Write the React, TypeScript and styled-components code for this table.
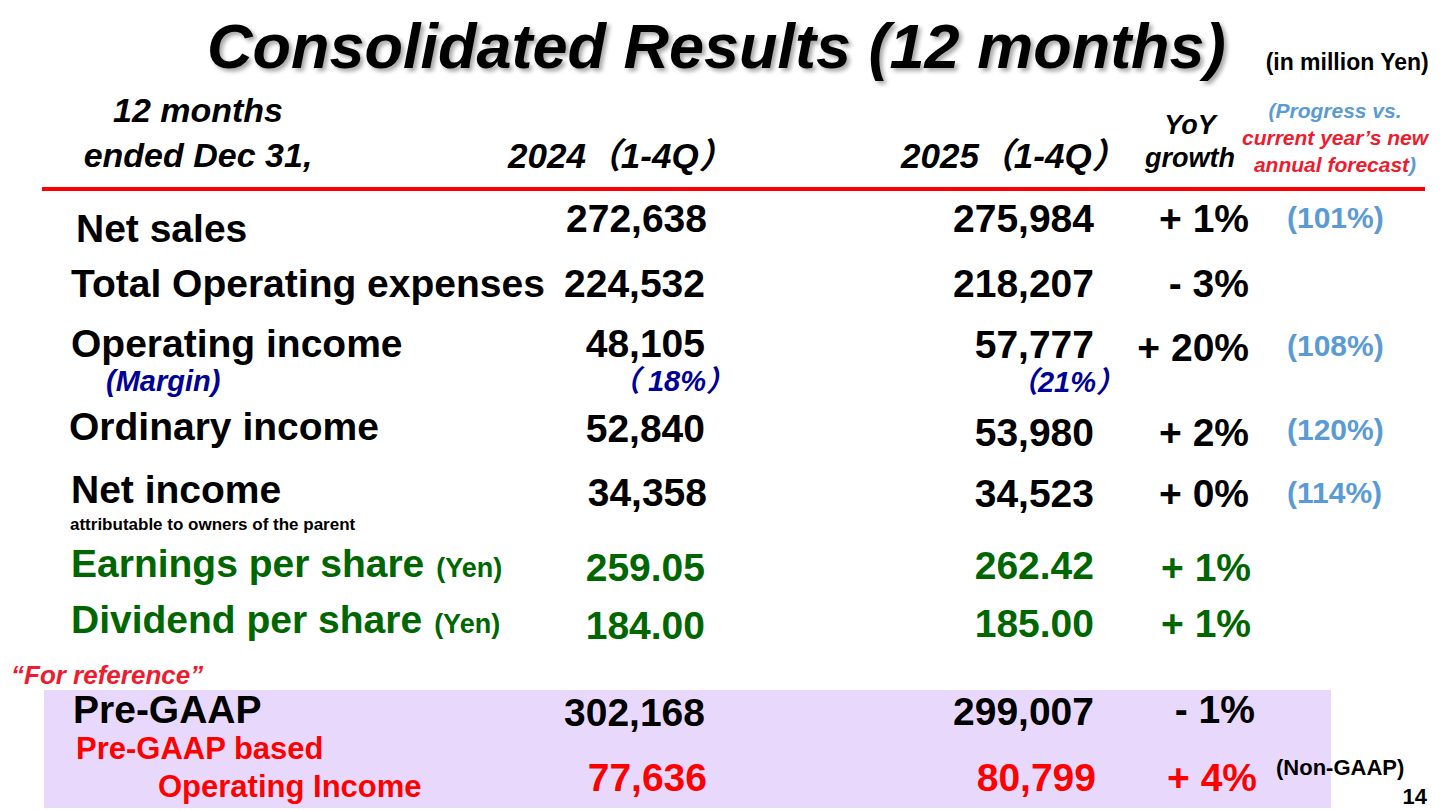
import styled, { createGlobalStyle } from 'styled-components'

const GlobalStyle = createGlobalStyle`
  html, body {
    margin: 0;
    padding: 0;
    background: #ffffff;
  }
`

const FONT = `"Liberation Sans", Arial, "Noto Sans CJK JP", sans-serif`
const GREEN = '#006600'
const RED = '#ff0000'
const NOTE_RED = '#ee1c2e'
const SKY = '#5b9bd5'
const NAVY = '#000099'

const Slide = styled.div`
  width: 1440px;
  height: 810px;
  overflow: hidden;
  background: #ffffff;
  display: flex;
  flex-direction: column;
  font-family: ${FONT};
  font-weight: bold;
  color: #000000;
`

const TitleRow = styled.div`
  display: flex;
  align-items: flex-start;
  height: 88px;
  box-sizing: border-box;
  padding: 15px 0 0 207px;
`

const Title = styled.h1`
  margin: 0;
  font-size: 63px;
  line-height: 1;
  font-style: italic;
  font-weight: bold;
  white-space: nowrap;
  text-shadow: 3px 3px 4px rgba(0, 0, 0, 0.35);
`

const Unit = styled.span`
  font-size: 23px;
  line-height: 1;
  margin: 36px 0 0 40px;
  white-space: nowrap;
`

const HeaderRow = styled.div`
  display: grid;
  grid-template-columns: 430px 393px 240px 98px 1fr;
  align-items: end;
  padding-left: 78px;
  font-style: italic;
`

const Period = styled.div`
  width: 240px;
  text-align: center;
  font-size: 34px;
  line-height: 45px;
`

const YearHead = styled.div`
  font-size: 35px;
  line-height: 45px;
  white-space: nowrap;
`

const YoyHead = styled.div`
  font-size: 27px;
  line-height: 33px;
  text-align: center;
  padding-bottom: 3px;
`

const ProgressHead = styled.div`
  font-size: 21px;
  line-height: 27px;
  text-align: center;
  padding-right: 9px;
  white-space: nowrap;
`

const Tint = styled.span<{ $color: string }>`
  color: ${p => p.$color};
`

const RedRule = styled.div`
  width: 1383px;
  height: 4px;
  margin: 9px 0 0 42px;
  background: ${RED};
`

const Row = styled.div<{ $h: number; $pad?: number; $color?: string }>`
  display: grid;
  grid-template-columns: 490px 147px 387px 155px 1fr;
  align-items: start;
  height: ${p => p.$h}px;
  padding-left: ${p => p.$pad ?? 70}px;
  color: ${p => p.$color ?? '#000000'};
`

const Label = styled.div<{ $dy: number; $dx?: number }>`
  font-size: 39px;
  line-height: 1;
  padding-top: ${p => p.$dy}px;
  margin-left: ${p => p.$dx ?? 0}px;
  white-space: nowrap;
`

const Value = styled.div<{ $dy: number; $shift?: number }>`
  font-size: 39px;
  line-height: 1;
  text-align: right;
  padding-top: ${p => p.$dy}px;
  margin-right: ${p => -(p.$shift ?? 0)}px;
  white-space: nowrap;
`

const Progress = styled.div<{ $dy: number }>`
  font-size: 30px;
  line-height: 1;
  color: ${SKY};
  padding: ${p => p.$dy}px 0 0 38px;
  white-space: nowrap;
`

const MarginNote = styled.div<{ $indent?: number; $shift?: number; $right?: boolean }>`
  font-size: 29px;
  line-height: 1;
  font-style: italic;
  color: ${NAVY};
  text-align: ${p => (p.$right ? 'right' : 'left')};
  margin-top: 4px;
  margin-left: ${p => p.$indent ?? 0}px;
  margin-right: ${p => -(p.$shift ?? 0)}px;
  white-space: nowrap;
`

const SubNote = styled.div`
  font-size: 17px;
  line-height: 1;
  margin-top: 7px;
`

const YenUnit = styled.span`
  font-size: 27px;
  margin-left: 12px;
`

const RefNote = styled.div`
  height: 35px;
  box-sizing: border-box;
  padding: 8px 0 0 11px;
  font-size: 26px;
  line-height: 24px;
  font-style: italic;
  color: ${NOTE_RED};
  white-space: nowrap;
`

const Footer = styled.div`
  display: flex;
  height: 120px;
`

const ReferenceBox = styled.div`
  width: 1287px;
  height: 118px;
  margin-left: 44px;
  background: #e8d9fc;
  display: flex;
  flex-direction: column;
`

const TwoLineLabel = styled.div`
  font-size: 31px;
  line-height: 38px;
  color: ${RED};
  white-space: nowrap;
`

const LabelLine = styled.div<{ $indent: number }>`
  padding-left: ${p => p.$indent}px;
`

const NonGaap = styled.div`
  font-size: 22px;
  line-height: 1;
  color: #000000;
  padding: 27px 0 0 27px;
  white-space: nowrap;
`

const PageNumber = styled.div`
  align-self: flex-end;
  margin: 0 13px 3px auto;
  font-size: 22px;
  line-height: 20px;
`

export default function App() {
  return (
    <>
      <GlobalStyle />
      <Slide>
        <TitleRow>
          <Title>Consolidated Results (12 months)</Title>
          <Unit>(in million Yen)</Unit>
        </TitleRow>

        <HeaderRow>
          <Period>
            12 months
            <br />
            ended Dec 31,
          </Period>
          <YearHead>2024（1-4Q）</YearHead>
          <YearHead>2025（1-4Q）</YearHead>
          <YoyHead>
            YoY
            <br />
            growth
          </YoyHead>
          <ProgressHead>
            <Tint $color={SKY}>(Progress vs.</Tint>
            <br />
            <Tint $color={NOTE_RED}>current year’s new</Tint>
            <br />
            <Tint $color={NOTE_RED}>annual forecast</Tint>
            <Tint $color={SKY}>)</Tint>
          </ProgressHead>
        </HeaderRow>

        <RedRule />

        <Row $h={64}>
          <Label $dy={18} $dx={6}>Net sales</Label>
          <Value $dy={8}>272,638</Value>
          <Value $dy={8}>275,984</Value>
          <Value $dy={8}>+ 1%</Value>
          <Progress $dy={12}>(101%)</Progress>
        </Row>

        <Row $h={60}>
          <Label $dy={9} $dx={1}>Total Operating expenses</Label>
          <Value $dy={9} $shift={-2}>224,532</Value>
          <Value $dy={9}>218,207</Value>
          <Value $dy={9}>- 3%</Value>
        </Row>

        <Row $h={83}>
          <div>
            <Label $dy={9} $dx={1}>Operating income</Label>
            <MarginNote $indent={36}>(Margin)</MarginNote>
          </div>
          <div>
            <Value $dy={9} $shift={-2}>48,105</Value>
            <MarginNote $right $shift={28}>（ 18%）</MarginNote>
          </div>
          <div>
            <Value $dy={10}>57,777</Value>
            <MarginNote $right $shift={31}>（21%）</MarginNote>
          </div>
          <Value $dy={13}>+ 20%</Value>
          <Progress $dy={16}>(108%)</Progress>
        </Row>

        <Row $h={62}>
          <Label $dy={9} $dx={-1}>Ordinary income</Label>
          <Value $dy={11} $shift={-2}>52,840</Value>
          <Value $dy={15}>53,980</Value>
          <Value $dy={15}>+ 2%</Value>
          <Progress $dy={17}>(120%)</Progress>
        </Row>

        <Row $h={75}>
          <div>
            <Label $dy={10} $dx={1}>Net income</Label>
            <SubNote>attributable to owners of the parent</SubNote>
          </div>
          <Value $dy={13}>34,358</Value>
          <Value $dy={14}>34,523</Value>
          <Value $dy={14}>+ 0%</Value>
          <Progress $dy={18}>(114%)</Progress>
        </Row>

        <Row $h={57} $color={GREEN}>
          <Label $dy={9} $dx={1}>
            Earnings per share<YenUnit>(Yen)</YenUnit>
          </Label>
          <Value $dy={13} $shift={-2}>259.05</Value>
          <Value $dy={11}>262.42</Value>
          <Value $dy={13} $shift={2}>+ 1%</Value>
        </Row>

        <Row $h={63} $color={GREEN}>
          <Label $dy={8} $dx={1}>
            Dividend per share<YenUnit>(Yen)</YenUnit>
          </Label>
          <Value $dy={14} $shift={-2}>184.00</Value>
          <Value $dy={12}>185.00</Value>
          <Value $dy={12} $shift={2}>+ 1%</Value>
        </Row>

        <RefNote>“For reference”</RefNote>

        <Footer>
          <ReferenceBox>
            <Row $h={40} $pad={26}>
              <Label $dy={0} $dx={3}>Pre-GAAP</Label>
              <Value $dy={3} $shift={-2}>302,168</Value>
              <Value $dy={2}>299,007</Value>
              <Value $dy={0} $shift={6}>- 1%</Value>
            </Row>
            <Row $h={78} $pad={26} $color={RED}>
              <TwoLineLabel>
                <LabelLine $indent={6}>Pre-GAAP based</LabelLine>
                <LabelLine $indent={88}>Operating Income</LabelLine>
              </TwoLineLabel>
              <Value $dy={28}>77,636</Value>
              <Value $dy={28} $shift={2}>80,799</Value>
              <Value $dy={28} $shift={8}>+ 4%</Value>
              <NonGaap>(Non-GAAP)</NonGaap>
            </Row>
          </ReferenceBox>
          <PageNumber>14</PageNumber>
        </Footer>
      </Slide>
    </>
  )
}
